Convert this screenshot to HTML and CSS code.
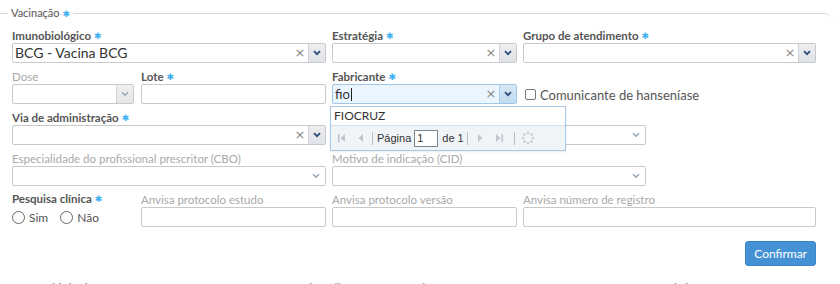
FILE: index.html
```html
<!DOCTYPE html>
<html lang="pt-BR">
<head>
<meta charset="utf-8">
<link rel="stylesheet" href="styles.css">
</head>
<body>
<fieldset class="panel">
  <legend class="legend">Vacinação <span class="req">✱</span></legend>
  <div class="form">
    <div class="cell span2">
      <div class="label">Imunobiológico <span class="req">✱</span></div>
      <div class="combo"><span class="val">BCG - Vacina BCG</span><span class="clear">×</span><span class="trig"><svg width="8" height="6" viewBox="0 0 8 6"><path d="M1 1.2 L4 4.2 L7 1.2" fill="none" stroke="#2d4b78" stroke-width="1.8"/></svg></span></div>
    </div>
    <div class="cell">
      <div class="label">Estratégia <span class="req">✱</span></div>
      <div class="combo"><span class="val"></span><span class="clear">×</span><span class="trig"><svg width="8" height="6" viewBox="0 0 8 6"><path d="M1 1.2 L4 4.2 L7 1.2" fill="none" stroke="#2d4b78" stroke-width="1.8"/></svg></span></div>
    </div>
    <div class="cell">
      <div class="label">Grupo de atendimento <span class="req">✱</span></div>
      <div class="combo"><span class="val"></span><span class="clear">×</span><span class="trig"><svg width="8" height="6" viewBox="0 0 8 6"><path d="M1 1.2 L4 4.2 L7 1.2" fill="none" stroke="#2d4b78" stroke-width="1.8"/></svg></span></div>
    </div>

    <div class="cell">
      <div class="label off">Dose</div>
      <div class="combo dose"><span class="val"></span><span class="trig off"><svg width="8" height="6" viewBox="0 0 8 6"><path d="M1 1.2 L4 4.2 L7 1.2" fill="none" stroke="#9aa7b8" stroke-width="1.6"/></svg></span></div>
    </div>
    <div class="cell">
      <div class="label">Lote <span class="req">✱</span></div>
      <div class="text"></div>
    </div>
    <div class="cell">
      <div class="label">Fabricante <span class="req">✱</span></div>
      <div class="combo focus"><span class="val">fio<span class="caret"></span></span><span class="clear">×</span><span class="trig"><svg width="8" height="6" viewBox="0 0 8 6"><path d="M1 1.2 L4 4.2 L7 1.2" fill="none" stroke="#2d4b78" stroke-width="1.8"/></svg></span></div>
    </div>
    <div class="cell">
      <div class="label"></div>
      <label class="check"><span class="box"></span>Comunicante de hanseníase</label>
    </div>

    <div class="cell span2">
      <div class="label">Via de administração <span class="req">✱</span></div>
      <div class="combo"><span class="val"></span><span class="clear">×</span><span class="trig"><svg width="8" height="6" viewBox="0 0 8 6"><path d="M1 1.2 L4 4.2 L7 1.2" fill="none" stroke="#2d4b78" stroke-width="1.8"/></svg></span></div>
    </div>
    <div class="cell span2b">
      <div class="label"></div>
      <div class="combo wide"><span class="val"></span><span class="trig plain"><svg width="8" height="6" viewBox="0 0 8 6"><path d="M1 1.2 L4 4.2 L7 1.2" fill="none" stroke="#9aa7b8" stroke-width="1.6"/></svg></span></div>
    </div>

    <div class="cell span2">
      <div class="label off">Especialidade do profissional prescritor (CBO)</div>
      <div class="combo"><span class="val"></span><span class="trig plain"><svg width="8" height="6" viewBox="0 0 8 6"><path d="M1 1.2 L4 4.2 L7 1.2" fill="none" stroke="#9aa7b8" stroke-width="1.6"/></svg></span></div>
    </div>
    <div class="cell span2b">
      <div class="label off">Motivo de indicação (CID)</div>
      <div class="combo wide"><span class="val"></span><span class="trig plain"><svg width="8" height="6" viewBox="0 0 8 6"><path d="M1 1.2 L4 4.2 L7 1.2" fill="none" stroke="#9aa7b8" stroke-width="1.6"/></svg></span></div>
    </div>

    <div class="cell">
      <div class="label">Pesquisa clínica <span class="req">✱</span></div>
      <div class="radios">
        <label class="radio"><span class="dot"></span>Sim</label>
        <label class="radio"><span class="dot"></span>Não</label>
      </div>
    </div>
    <div class="cell">
      <div class="label off">Anvisa protocolo estudo</div>
      <div class="text"></div>
    </div>
    <div class="cell">
      <div class="label off">Anvisa protocolo versão</div>
      <div class="text"></div>
    </div>
    <div class="cell">
      <div class="label off">Anvisa número de registro</div>
      <div class="text"></div>
    </div>
  </div>
  <div class="actions"><button class="btn">Confirmar</button></div>

  <div class="popup">
    <div class="item">FIOCRUZ</div>
    <div class="pager">
      <svg class="ic i1" width="12" height="12" viewBox="0 0 12 12"><rect x="2" y="2" width="1.6" height="8" fill="#bfc6cf"/><path d="M9 2 L4.5 6 L9 10 Z" fill="#bfc6cf"/></svg>
      <svg class="ic i2" width="12" height="12" viewBox="0 0 12 12"><path d="M8 2 L3.5 6 L8 10 Z" fill="#bfc6cf"/></svg>
      <span class="sep s1"></span>
      <span class="ptxt pg">Página</span><span class="pinput">1</span><span class="ptxt de">de 1</span>
      <span class="sep s2"></span>
      <svg class="ic i3" width="12" height="12" viewBox="0 0 12 12"><path d="M4 2 L8.5 6 L4 10 Z" fill="#bfc6cf"/></svg>
      <svg class="ic i4" width="12" height="12" viewBox="0 0 12 12"><path d="M3 2 L7.5 6 L3 10 Z" fill="#bfc6cf"/><rect x="8.4" y="2" width="1.6" height="8" fill="#bfc6cf"/></svg>
      <span class="sep s3"></span>
      <svg class="ic i5" width="14" height="14" viewBox="0 0 14 14"><g fill="#c8ccd2"><circle cx="7" cy="2" r="1.3"/><circle cx="10.5" cy="3.5" r="1.3"/><circle cx="12" cy="7" r="1.3"/><circle cx="10.5" cy="10.5" r="1.3"/><circle cx="7" cy="12" r="1.3"/><circle cx="3.5" cy="10.5" r="1.3"/><circle cx="2" cy="7" r="1.3"/><circle cx="3.5" cy="3.5" r="1.3"/></g></svg>
    </div>
  </div>
</fieldset>
<div class="grid-head">
  <span class="h1">Imunobiológico</span>
  <span class="h2">Data de aplicação</span>
  <span class="h3">Estratégia</span>
  <span class="h4">Dose</span>
  <span class="h5">Lote</span>
  <span class="h6">Fabricante</span>
</div>
</body>
</html>
```

FILE: styles.css
```css
html, body {
  margin: 0;
  padding: 0;
  height: 284px;
  overflow: hidden;
  background: #fff;
  font-family: Lato, "Open Sans", sans-serif;
  font-size: 12px;
  color: #555;
}

.panel {
  position: relative;
  margin: 6px 7px 0 -10px;
  padding: 0 0 0 22px;
  border: none;
  border-top: 1px solid #d8d8d8;
  border-radius: 9px;
  min-width: 0;
}

.legend {
  margin-left: -4px;
  padding: 0 3px;
  line-height: 14px;
  font-size: 11px;
  color: #555;
}

.req {
  color: #3fb0f0;
  font-size: 9px;
  font-weight: normal;
  font-family: "DejaVu Sans", sans-serif;
}

.form {
  display: grid;
  grid-template-columns: 123px 185px 185px 293px;
  column-gap: 6px;
  margin-top: 1px;
}

.cell {
  display: flex;
  flex-direction: column;
  height: 41px;
  min-width: 0;
}

.span2 { grid-column: 1 / span 2; }
.span2b { grid-column: 3 / span 2; }

.label {
  height: 21px;
  display: flex;
  align-items: flex-end;
  gap: 3px;
  line-height: 14px;
  font-size: 11.5px;
  font-weight: bold;
  color: #555;
  white-space: nowrap;
}

.label.off {
  font-weight: normal;
  color: #a9a9a9;
}

.combo, .text {
  box-sizing: border-box;
  height: 20px;
  border: 1px solid #c9c9c9;
  border-radius: 2px;
  background: #fff;
  display: flex;
  align-items: stretch;
}

.combo.dose { width: 122px; }
.combo.wide { width: 314px; }

.val {
  flex: 1;
  padding-left: 2px;
  line-height: 18px;
  font-size: 14px;
  color: #333;
  white-space: nowrap;
  overflow: hidden;
}

.clear {
  width: 14px;
  line-height: 18px;
  text-align: center;
  color: #888;
  font-size: 13px;
  font-family: "DejaVu Sans", sans-serif;
  margin-right: 1px;
}

.trig {
  width: 16px;
  background: linear-gradient(#eceef1, #dfe2e6);
  border-left: 1px solid #cfd3d8;
  display: flex;
  align-items: center;
  justify-content: center;
}

.trig.off {
  background: linear-gradient(#f0f0f0, #e6e6e6);
}

.trig.plain {
  background: #fff;
  border-left: none;
  width: 18px;
}

.combo.focus {
  border-color: #9fc8e8;
  background: #eaf5fd;
}

.combo.focus .val { font-size: 13px; }

.combo.focus .trig {
  background: linear-gradient(#d6e8f6, #c2dbef);
  border-left-color: #a9cce8;
}

.caret {
  display: inline-block;
  width: 1px;
  height: 13px;
  background: #222;
  vertical-align: -2px;
  margin-left: 1px;
}

.check {
  display: flex;
  align-items: center;
  gap: 4px;
  height: 20px;
  margin-top: 4px;
  margin-left: 2px;
  font-size: 13px;
  color: #555;
  white-space: nowrap;
}

.box {
  width: 9px;
  height: 9px;
  border: 1px solid #777;
  border-radius: 2px;
  background: #fff;
}

.radios {
  display: flex;
  gap: 12px;
  height: 20px;
  align-items: center;
  margin-top: 1px;
}

.radio {
  display: flex;
  align-items: center;
  gap: 4px;
  color: #555;
}

.dot {
  width: 11px;
  height: 11px;
  border: 1px solid #666;
  border-radius: 50%;
}

.actions {
  display: flex;
  justify-content: flex-end;
  width: 804px;
  margin-top: 14px;
}

.btn {
  height: 25px;
  padding: 0 8px;
  border: 1px solid #3a86c8;
  border-radius: 3px;
  background: #4591d6;
  color: #fff;
  font-family: Lato, sans-serif;
  font-size: 12px;
}

.popup {
  position: absolute;
  left: 340px;
  top: 85px;
  width: 234px;
  border: 1px solid #a8c8e6;
  background: #fff;
  box-shadow: 0 1px 2px rgba(0,0,0,0.08);
}

.item {
  height: 18px;
  line-height: 18px;
  padding-left: 3px;
  color: #333;
  border-bottom: 1px solid #d4e2ef;
}

.pager {
  height: 24px;
  background: #f1f4f7;
  display: flex;
  align-items: center;
  padding-left: 5px;
  font-family: "Liberation Sans", Arial, sans-serif;
  font-size: 11px;
  color: #333;
}

.ic { flex: none; }
.i2 { margin-left: 7px; }
.i3 { margin-left: 6px; }
.i4 { margin-left: 7px; }
.i5 { margin-left: 6px; }

.sep {
  flex: none;
  width: 1px;
  height: 13px;
  background: #b8c0c8;
}
.s1 { margin-left: 5px; }
.s2 { margin-left: 3px; }
.s3 { margin-left: 9px; }

.ptxt { white-space: nowrap; }
.pg { margin-left: 4px; }
.de { margin-left: 4px; }

.pinput {
  box-sizing: border-box;
  width: 24px;
  height: 17px;
  border: 1px solid #7a8694;
  background: #fff;
  line-height: 15px;
  padding-left: 2px;
  margin-left: 3px;
}

.grid-head {
  position: relative;
  margin-top: 15px;
  height: 14px;
  line-height: 14px;
  font-weight: bold;
  color: #999;
  white-space: nowrap;
}

.grid-head span { position: absolute; top: 0; }
.h1 { left: 18px; }
.h2 { left: 277px; }
.h3 { left: 378px; }
.h4 { left: 520px; }
.h5 { left: 574px; }
.h6 { left: 662px; }
```
